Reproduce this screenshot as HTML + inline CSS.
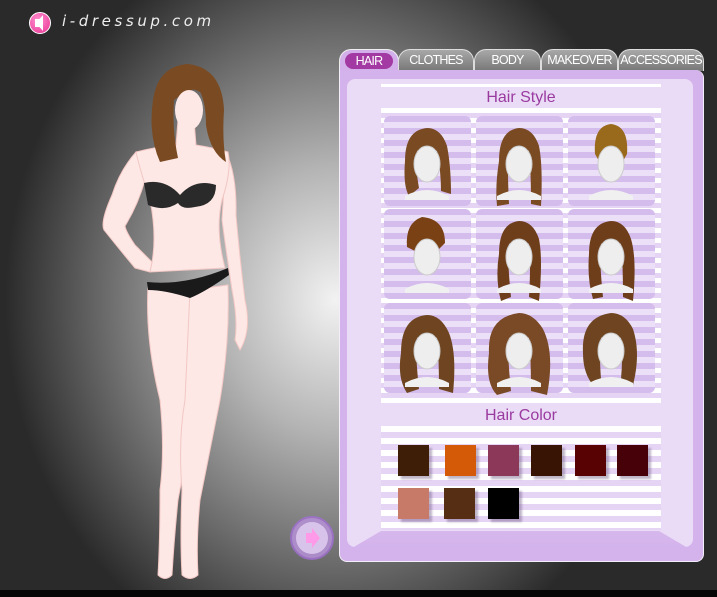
<!DOCTYPE html>
<html><head><style>
*{margin:0;padding:0;box-sizing:border-box}
body{width:717px;height:597px;overflow:hidden;position:relative;font-family:"Liberation Sans",sans-serif;
background:radial-gradient(ellipse 330px 380px at 335px 300px,#f2f2f2 0%,#b4b4b4 35%,#6a6a6a 70%,#2a2a2a 100%),#111;}
.abs{position:absolute}
.tab{position:absolute;top:49px;height:22px;border:1px solid #ddd;border-bottom:none;border-radius:12px 12px 0 0;background:linear-gradient(#a8a8a8,#777);color:#fff;font-size:12.5px;text-align:center;line-height:21px;letter-spacing:-0.8px}
.cell{position:absolute;width:87px;height:90px;border-radius:6px;background:repeating-linear-gradient(#d4bcec 0 6px,#ecdff8 6px 12px)}
.sw{position:absolute;width:31px;height:31px;box-shadow:3px 3px 2px rgba(110,90,130,.45)}
.title{position:absolute;left:381px;width:280px;text-align:center;color:#9a3ba0;font-size:16px}
</style></head><body>
<div class="abs" style="left:0;top:590px;width:717px;height:7px;background:#050505"></div>
<!-- logo -->
<div class="abs" style="left:29px;top:12px;width:22px;height:22px;border-radius:50%;background:radial-gradient(circle at 40% 35%,#ff8fd0,#e8308f);border:1px solid #fff"></div>
<div class="abs" style="left:35px;top:19px;width:5px;height:8px;background:#fff"></div>
<div class="abs" style="left:36px;top:15px;width:0;height:0;border-top:8px solid transparent;border-bottom:8px solid transparent;border-right:7px solid #fff"></div>
<div class="abs" style="left:62px;top:12px;color:#eee;font-size:15px;font-style:italic;letter-spacing:3.6px;font-family:'DejaVu Sans',sans-serif">i-dressup.com</div>

<!-- figure -->
<svg class="abs" style="left:0;top:0" width="340" height="597">
<g fill="#fde8e6" stroke="#f2c7c3" stroke-width="1">
<path d="M136 152 Q120 170 112 195 Q100 222 104 230 Q120 250 135 268 L150 272 L152 262 L135 245 Q126 232 125 226 Q138 205 145 180 Z"/>
<path d="M226 152 Q237 175 236 215 Q240 260 245 300 Q252 330 240 350 L235 340 Q238 320 232 290 Q226 250 222 220 Z"/>
<path d="M178 120 L194 120 L196 145 Q215 148 228 152 Q232 170 222 200 Q215 230 225 268 L150 272 Q158 240 150 200 Q140 170 136 152 Q160 146 176 145 Z"/>
<path d="M148 285 Q145 340 160 400 Q165 450 160 490 Q160 540 158 575 Q165 582 172 575 Q174 540 178 500 Q188 450 190 400 Q195 350 200 300 Z"/>
<path d="M190 290 L228 285 Q230 340 220 400 Q210 450 200 500 Q196 540 198 575 Q190 582 182 575 Q180 540 182 490 Q178 440 185 400 Z"/>
</g>
<path d="M188 64 Q158 66 153 100 Q148 135 160 162 L178 158 Q172 130 174 100 Q184 92 198 88 Q206 100 206 125 Q210 152 226 162 Q222 140 224 110 Q222 68 188 64Z" fill="#7a4a22"/>
<ellipse cx="189" cy="110" rx="14" ry="20" fill="#fde8e6"/>
<path d="M172 100 Q185 80 206 96 Q200 84 188 82 Q176 84 172 100Z" fill="#7a4a22"/>
<path d="M144 183 Q165 178 180 195 Q195 178 216 185 Q216 205 195 207 Q182 210 178 203 Q165 212 148 205 Z" fill="#2a2a2a"/>
<path d="M147 282 Q185 286 228 268 L229 275 Q205 292 190 298 Q165 290 148 290 Z" fill="#1a1a1a"/>
<circle cx="312" cy="538" r="21" fill="#b792d8" opacity=".85" stroke="#a070d0" stroke-width="2"/>
<circle cx="312" cy="538" r="16" fill="#d8c4ea"/>
<path d="M306 533 h6 v-5 l8 10 l-8 10 v-5 h-6z" fill="#ff9ae8"/>
</svg>

<!-- tabs -->
<div class="tab" style="left:339px;width:60px;background:#d3b0ea;border-color:#eee"><div style="margin:3px 5px;height:16px;line-height:16px;border-radius:8px;background:#a33aa3">HAIR</div></div>
<div class="tab" style="left:398px;width:76px">CLOTHES</div>
<div class="tab" style="left:474px;width:67px">BODY</div>
<div class="tab" style="left:541px;width:77px">MAKEOVER</div>
<div class="tab" style="left:618px;width:86px">ACCESSORIES</div>
<!-- panel -->
<div class="abs" style="left:339px;top:70px;width:365px;height:492px;background:#d4b2ec;border:1px solid #f4eefa;border-top:none;border-radius:0 8px 8px 8px"></div>
<div class="abs" style="left:347px;top:79px;width:346px;height:468px;background:#eadbf6;border-radius:8px"></div>
<div class="abs" style="left:347px;top:531px;width:346px;height:20px;background:linear-gradient(#d6b8ec,#d4b2ec);clip-path:polygon(34px 0,312px 0,100% 100%,0 100%)"></div>
<div class="abs" style="left:381px;top:84px;width:280px;height:3px;background:#fff"></div>
<div class="title" style="top:89px">Hair Style</div>
<div class="abs" style="left:381px;top:108px;width:280px;height:295px;background:repeating-linear-gradient(#fff 0 5px,#e6d4f4 5px 10px)"></div>
<div class="cell" style="left:384px;top:116px"></div><div class="cell" style="left:476px;top:116px"></div><div class="cell" style="left:568px;top:116px"></div>
<div class="cell" style="left:384px;top:209px"></div><div class="cell" style="left:476px;top:209px"></div><div class="cell" style="left:568px;top:209px"></div>
<div class="cell" style="left:384px;top:303px"></div><div class="cell" style="left:476px;top:303px"></div><div class="cell" style="left:568px;top:303px"></div>
<svg class="abs" style="left:384px;top:116px" width="280" height="285">
<defs><g id="f"><path d="M-22 70 Q0 58 22 70 L22 74 L-22 74Z" fill="#f0f0f0"/><ellipse cx="0" cy="38" rx="13" ry="18" fill="#eee" stroke="#ccc"/></g></defs>
<g transform="translate(43,10)"><path d="M0 2 Q-22 4 -22 35 Q-24 60 -18 70 L-8 62 Q-12 40 -10 25 Q0 18 10 25 Q14 45 14 65 L24 68 Q24 40 20 20 Q14 2 0 2Z" fill="#7a4a22"/><use href="#f"/></g>
<g transform="translate(135,10)"><path d="M0 2 Q-20 4 -20 35 Q-24 60 -22 80 L-10 78 Q-12 40 -10 25 Q0 18 10 25 Q12 45 12 78 L22 80 Q24 40 20 20 Q14 2 0 2Z" fill="#7a4a22"/><use href="#f"/></g>
<g transform="translate(227,10)"><path d="M0 -2 Q-18 0 -16 28 L-12 35 Q-8 22 0 22 Q8 22 12 35 L16 28 Q18 0 0 -2Z" fill="#9a6a1c"/><use href="#f"/></g>
<g transform="translate(43,103)"><path d="M-5 -2 Q-22 4 -20 28 L-12 32 Q-8 22 0 22 Q8 22 12 30 L18 24 Q18 0 -5 -2Z" fill="#7a4214"/><use href="#f"/></g>
<g transform="translate(135,103)"><path d="M0 2 Q-20 4 -20 35 Q-24 60 -18 82 L-8 78 Q-12 40 -10 25 Q0 18 10 25 Q12 45 10 78 L20 82 Q24 40 20 20 Q14 2 0 2Z" fill="#6e3e1a"/><use href="#f"/></g>
<g transform="translate(227,103)"><path d="M0 2 Q-22 4 -22 35 Q-24 60 -18 80 L-8 78 Q-12 40 -10 25 Q0 18 10 25 Q12 45 12 78 L22 82 Q26 40 20 20 Q14 2 0 2Z" fill="#6e3e1a"/><use href="#f"/></g>
<g transform="translate(43,197)"><path d="M0 2 Q-26 4 -26 40 Q-30 65 -20 80 L-8 76 Q-12 40 -10 25 Q0 18 10 25 Q12 45 12 76 L26 80 Q30 40 22 20 Q14 2 0 2Z" fill="#6e4520"/><use href="#f"/></g>
<g transform="translate(135,197)"><path d="M0 0 Q-32 4 -30 40 Q-34 70 -22 82 L-8 78 Q-12 40 -10 25 Q0 18 10 25 Q12 45 12 78 L28 82 Q36 40 24 16 Q14 0 0 0Z" fill="#7a4a26"/><use href="#f"/></g>
<g transform="translate(227,197)"><path d="M0 0 Q-30 4 -28 40 Q-28 60 -18 72 L-10 66 Q-12 40 -10 25 Q0 18 10 25 Q12 45 10 66 L22 72 Q30 40 22 16 Q14 0 0 0Z" fill="#6e4520"/><use href="#f"/></g>
</svg>
<div class="title" style="top:407px">Hair Color</div>
<div class="abs" style="left:381px;top:426px;width:280px;height:104px;background:repeating-linear-gradient(#fff 0 6px,#e6d4f4 6px 12px)"></div>
<div class="sw" style="left:398px;top:445px;background:#3e1e06"></div>
<div class="sw" style="left:445px;top:445px;background:#d45a08"></div>
<div class="sw" style="left:488px;top:445px;background:#8c3858"></div>
<div class="sw" style="left:531px;top:445px;background:#381404"></div>
<div class="sw" style="left:575px;top:445px;background:#580204"></div>
<div class="sw" style="left:617px;top:445px;background:#460208"></div>
<div class="sw" style="left:398px;top:488px;background:#c87a68"></div>
<div class="sw" style="left:444px;top:488px;background:#552e14"></div>
<div class="sw" style="left:488px;top:488px;background:#000"></div>
</body></html>
